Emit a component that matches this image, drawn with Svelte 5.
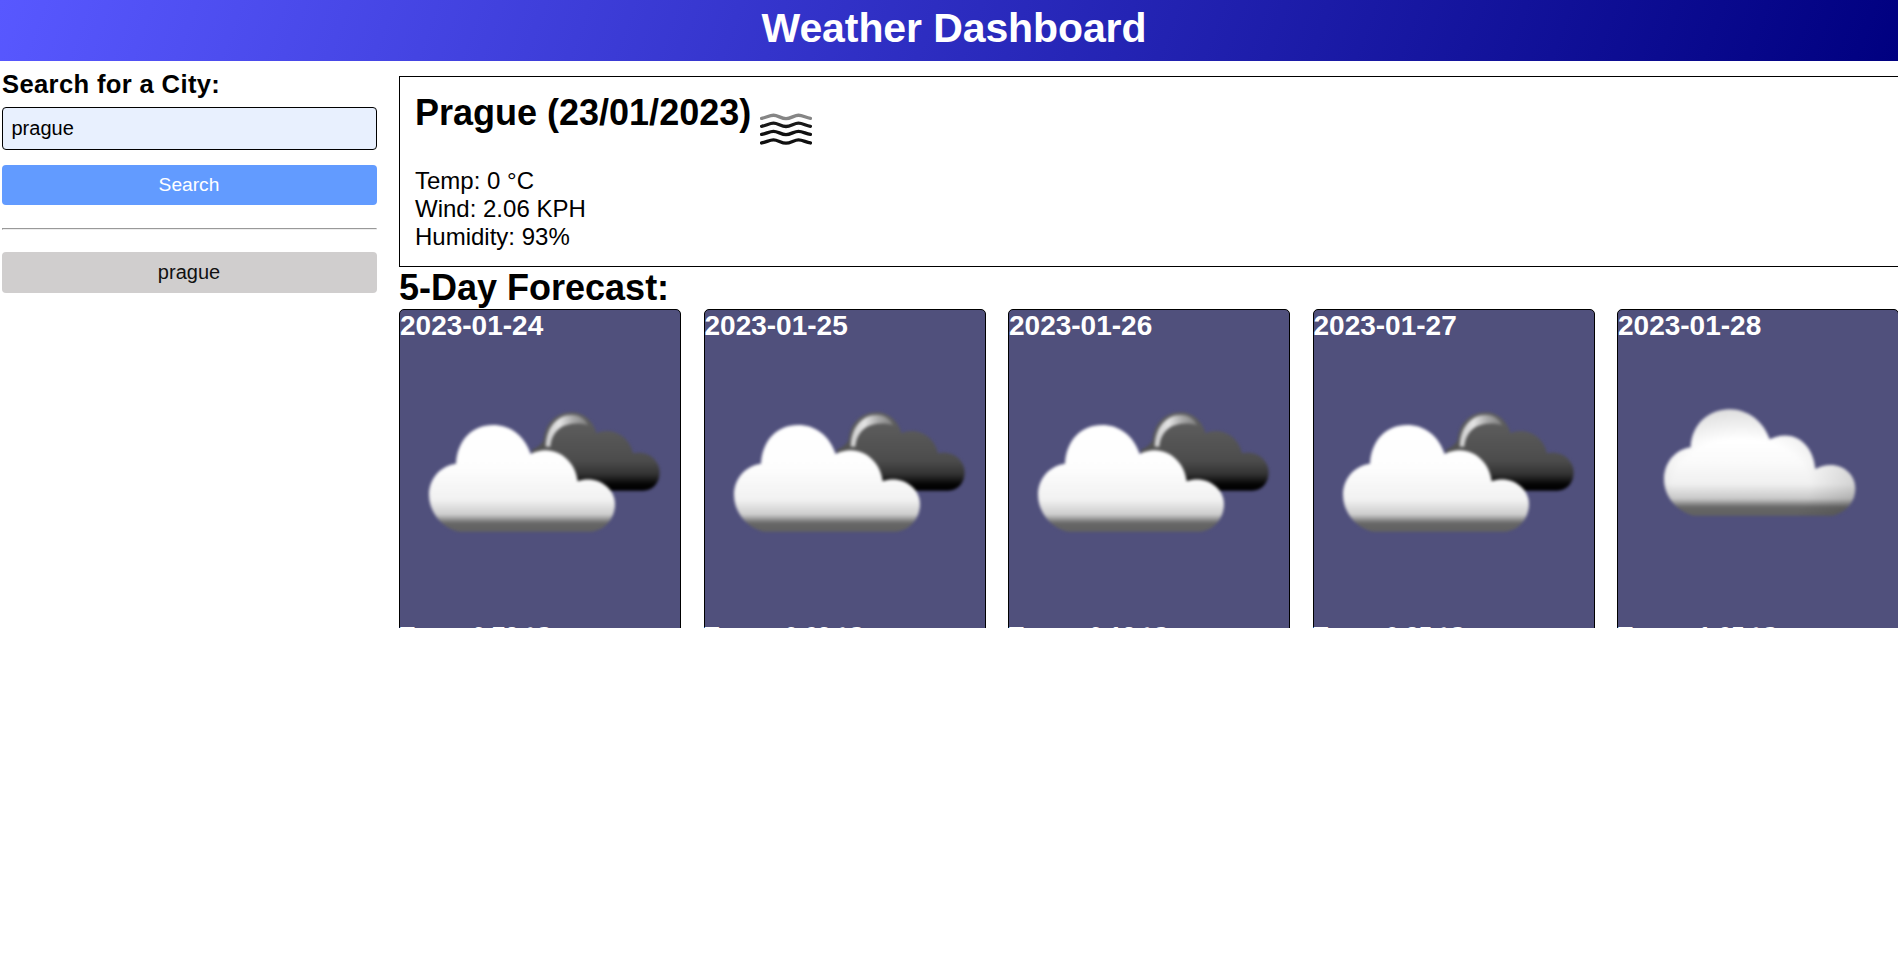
<script>
  const days = [
    { date: '2023-01-24', temp: '0.73', icon: 'broken' },
    { date: '2023-01-25', temp: '-0.69', icon: 'broken' },
    { date: '2023-01-26', temp: '-0.18', icon: 'broken' },
    { date: '2023-01-27', temp: '0.85', icon: 'broken' },
    { date: '2023-01-28', temp: '-1.65', icon: 'cloud' }
  ];
  const waves = [
    { y: 16.2, color: '#858585' },
    { y: 23.8, color: '#181818' },
    { y: 31.6, color: '#101010' },
    { y: 39.8, color: '#101010' }
  ];
  const cloud = 'M280 647C225 630 193 585 193 538C193 485 230 448 273 442C276 370 330 328 390 328C445 328 492 365 510 418C575 385 640 425 647 507C705 475 767 510 767 565C767 605 742 635 700 647Z';
  let city = $state('prague');
</script>

<header><h1>Weather Dashboard</h1></header>
<div class="layout">
  <aside>
    <label for="city">Search for a City:</label>
    <input id="city" bind:value={city} />
    <button class="search">Search</button>
    <hr />
    <button class="history">prague</button>
  </aside>
  <main>
    <section class="today">
      <h2>Prague (23/01/2023)
        <svg class="mist" viewBox="0 0 50 50">
          <defs><filter id="fog" color-interpolation-filters="sRGB"><feGaussianBlur stdDeviation=".6" /></filter></defs>
          <g filter="url(#fog)" fill="none" stroke-width="3.2" stroke-linecap="round">
            {#each waves as wave}
              <path stroke={wave.color} transform="translate(0 {wave.y})" d="M1.500 1.500C6 .8 9 -1.500 13 -1.500S20.500 1.700 25 1.700S33 -1.500 37 -1.500S44 .8 48.500 1.500" />
            {/each}
          </g>
        </svg>
      </h2>
      <p>Temp: 0 °C</p>
      <p>Wind: 2.06 KPH</p>
      <p>Humidity: 93%</p>
    </section>
    <h2 class="title">5-Day Forecast:</h2>
    <div class="days">
      {#each days as day, i}
        <article>
          <h3>{day.date}</h3>
          {#if day.icon === 'broken'}
            <svg class="sky" viewBox="15 126 840 840">
              <defs>
                <filter id="soft{i}" color-interpolation-filters="sRGB"><feGaussianBlur stdDeviation="5" /></filter>
                <linearGradient id="white{i}" gradientUnits="userSpaceOnUse" x1="0" y1="375" x2="0" y2="695">
                  <stop offset="0" stop-color="#fff" /><stop offset=".4" stop-color="#fdfdfd" />
                  <stop offset=".7" stop-color="#f1f1f1" /><stop offset=".84" stop-color="#ccc" />
                  <stop offset=".92" stop-color="#666" /><stop offset="1" stop-color="#606060" />
                </linearGradient>
                <linearGradient id="dark{i}" gradientUnits="userSpaceOnUse" x1="0" y1="345" x2="0" y2="572">
                  <stop offset="0" stop-color="#606060" /><stop offset=".6" stop-color="#4c4c4c" />
                  <stop offset=".78" stop-color="#333" /><stop offset=".92" stop-color="#030303" />
                  <stop offset="1" stop-color="#000" />
                </linearGradient>
                <linearGradient id="rim{i}" gradientUnits="userSpaceOnUse" x1="455" y1="0" x2="585" y2="0">
                  <stop offset="0" stop-color="#ccc" /><stop offset=".3" stop-color="#e4e4e4" />
                  <stop offset=".6" stop-color="#aaa" /><stop offset="1" stop-color="#777" />
                </linearGradient>
              </defs>
              <g filter="url(#soft{i})">
                <path fill="url(#dark{i})" d="M410 450Q438 438 446 420C450 370 485 337 530 337C565 337 592 360 605 400C645 381 700 402 714 460C758 450 794 480 794 516C794 548 775 572 744 572H560L430 520Z" />
                <path fill="url(#rim{i})" d="M452 440C452 385 485 345 530 345C556 345 572 358 580 376C550 366 515 370 495 384C478 397 469 414 466 440Z" />
                <path fill="url(#white{i})" d="M190 695C140 684 102 635 102 585C102 535 136 498 183 491C187 420 232 375 294 375C345 375 388 405 407 462C475 427 542 478 548 544C602 525 660 560 660 612C660 655 630 690 590 695Z" />
              </g>
            </svg>
          {:else}
            <svg class="sky" viewBox="55 126 840 840">
              <defs>
                <filter id="soft{i}" color-interpolation-filters="sRGB"><feGaussianBlur stdDeviation="5" /></filter>
                <linearGradient id="white{i}" gradientUnits="userSpaceOnUse" x1="0" y1="328" x2="0" y2="647">
                  <stop offset="0" stop-color="#fbfbfb" /><stop offset=".3" stop-color="#fff" />
                  <stop offset=".5" stop-color="#fafafa" /><stop offset=".7" stop-color="#f0f0f0" />
                  <stop offset=".84" stop-color="#c8c8c8" /><stop offset=".92" stop-color="#666" />
                  <stop offset="1" stop-color="#606060" />
                </linearGradient>
                <radialGradient id="shade{i}" cx="0" cy="0" r="1" gradientUnits="userSpaceOnUse" gradientTransform="translate(425 560) scale(370 260)">
                  <stop offset=".55" stop-color="#000" stop-opacity="0" />
                  <stop offset="1" stop-color="#000" stop-opacity=".15" />
                </radialGradient>
              </defs>
              <g filter="url(#soft{i})">
                <path fill="url(#white{i})" d={cloud} />
                <path fill="url(#shade{i})" d={cloud} />
              </g>
            </svg>
          {/if}
          <p>Temp:{day.temp} °C</p>
        </article>
      {/each}
    </div>
  </main>
</div>

<style>
  :global(body) { margin: 0; overflow: hidden; background: #fff; color: #000; font-family: Arial, "Liberation Sans", sans-serif; }
  h1, h2, h3, p { margin: 0; }
  header { height: 61px; box-sizing: border-box; padding-top: 5px; padding-left: 10px; background: linear-gradient(110deg, #5858ff, #000080); color: #fff; text-align: center; }
  h1 { font-size: 41px; line-height: 47px; letter-spacing: -.1px; }
  .layout { display: flex; height: 567px; overflow: hidden; }
  aside { width: 375px; margin: 9px 22px 0 2px; flex: none; display: flex; flex-direction: column; }
  label { font-size: 25.6px; font-weight: bold; line-height: 29px; letter-spacing: .35px; }
  input { box-sizing: border-box; height: 43px; margin: 8px 0 15px; padding: 1px 8.5px; border: 1px solid #000; border-radius: 4px; background: #e8f0fe; font: 20px Arial, "Liberation Sans", sans-serif; outline: none; }
  button { height: 40px; padding: 0 1px 0 0; border: 0; border-radius: 4px; font: 20px Arial, "Liberation Sans", sans-serif; }
  .search { background: #629bff; color: #fff; font-size: 19.2px; }
  hr { width: 100%; box-sizing: border-box; margin: 23px 0 22px; height: 2px; border: 1px solid; border-color: #999 #eee #eee #999; }
  .history { height: 41px; background: #d0cece; color: #111; }
  main { flex: 1; min-width: 0; padding-top: 15px; }
  .today { box-sizing: border-box; height: 191px; width: 1600px; padding: 15px; border: 1px solid #000; font-size: 24px; line-height: 28px; }
  h2 { font-size: 36px; line-height: 41px; }
  .today h2 { display: flex; height: 75px; gap: 9px; }
  .mist { width: 52px; height: 52px; margin-top: 8px; }
  .title { height: 42px; }
  .days { display: flex; gap: 22.5px; width: 1500px; }
  article { box-sizing: border-box; width: 282px; height: 440px; flex: none; border: 1px solid #000; border-radius: 5px; background: #50507c; color: #fff; font-size: 24px; font-weight: bold; line-height: 28px; font-kerning: none; }
  h3 { font-size: 28px; line-height: 32px; }
  .sky { display: block; width: 280px; height: 280px; }
</style>
